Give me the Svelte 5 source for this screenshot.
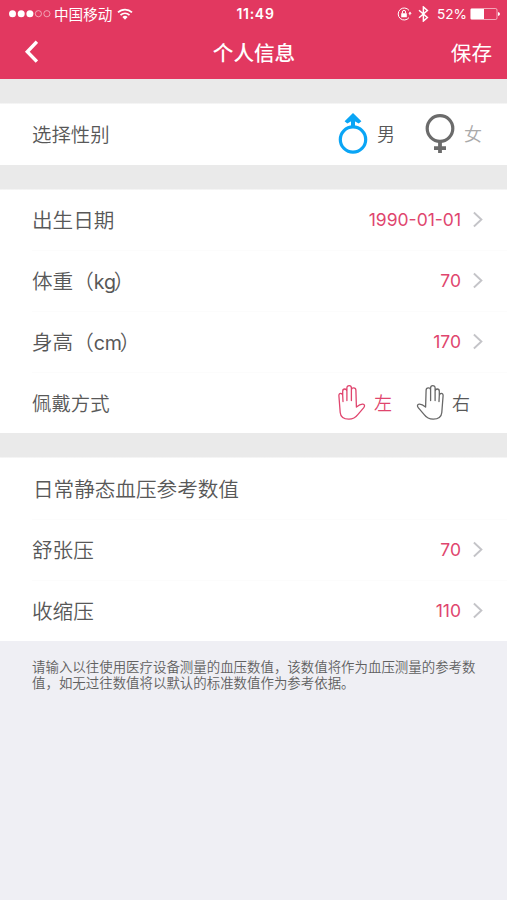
<script>
  const profile = [
    { label: '出生日期', value: '1990-01-01' },
    { label: '体重', unit: 'kg', value: '70' },
    { label: '身高', unit: 'cm', value: '170' }
  ];
  const pressure = [
    { label: '舒张压', value: '70' },
    { label: '收缩压', value: '110' }
  ];
</script>

{#snippet hand()}
  <path d="M5 16.5 4.7 10.5C4.6 9.2 3.8 8.4 2.6 8.4S.8 9.3.9 10.8L2.2 27.5C2.6 32 5.8 34.1 10.8 34.1c3.9 0 6.8-1.5 9-4.5l6-7c1.2-1.4 1-3.2-1-3.4-2.2-.2-4.3 1.1-6.4 2.8L17.9 5.2c0-1.5-.9-2.3-2.3-2.3S13.4 3.6 13.4 5M4.7 10.5V6.2C4.7 4.8 5.4 4 6.7 4s2.2.8 2.2 2.2v9.3M8.9 6V3C8.9 1.5 9.8.7 11.2.7S13.4 1.5 13.4 3v12.5" />
{/snippet}

{#snippet rowItem(item)}
  <div class="row">
    <span class="label">{item.label}{#if item.unit}（<span class="unit">{item.unit}</span>）{/if}</span>
    <span class="value">{item.value}</span>
    <svg class="chevron" width="11" height="17" viewBox="0 0 11 17"><path d="M.9 1.5 8.4 8.5l-7.5 7" /></svg>
  </div>
{/snippet}

<div class="screen">
  <header>
    <div class="status">
      <div class="carrier">
        <svg width="43" height="10" viewBox="0 0 43 10">
          <g fill="#fff"><circle cx="3.5" cy="4.7" r="3.5" /><circle cx="12.2" cy="4.7" r="3.5" /><circle cx="20.9" cy="4.7" r="3.5" /></g>
          <g fill="none" stroke="#fff" stroke-width=".7" opacity=".75"><circle cx="29.4" cy="4.7" r="3.1" /><circle cx="37.9" cy="4.7" r="3.1" /></g>
        </svg>
        <span>中国移动</span>
        <svg class="wifi" width="16" height="12" viewBox="0 0 16 12">
          <g fill="none" stroke="#fff" stroke-width="1.7"><path d="M1 4.4a10 10 0 0 1 14 0M3.5 7.1a6.4 6.4 0 0 1 9 0" /></g>
          <path fill="#fff" d="M5.4 9a3.7 3.7 0 0 1 5.2 0L8 11.7z" />
        </svg>
      </div>
      <div class="time">11:49</div>
      <div class="system">
        <svg width="15" height="14" viewBox="0 0 15 14">
          <path fill="none" stroke="#fff" d="M12 3.4A6 6 0 1 0 12 10.6M12.9 8.2V6" />
          <path fill="#fff" d="m11.4 6.8 1.6-2.3 1.7 2.3zM4.2 6.2h5.6v4H4.2z" />
          <path fill="none" stroke="#fff" d="M5.4 6.5V5a1.6 1.6 0 0 1 3.2 0v1.5" />
        </svg>
        <svg class="bt" width="11" height="16" viewBox="0 0 11 16"><path fill="none" stroke="#fff" stroke-width="1.5" d="m1 4.2 8.4 7.3-4 3.5V1l4 3.5L1 11.8" /></svg>
        <span>52%</span>
        <svg class="battery" width="30" height="12" viewBox="0 0 30 12">
          <rect x=".5" y=".5" width="26.5" height="11" rx="1.5" fill="none" stroke="#fff" stroke-width=".7" opacity=".8" />
          <path fill="#fff" d="M1 1h13v10H1zM28 4q2 .5 2 2t-2 2z" />
        </svg>
      </div>
    </div>
    <nav>
      <svg width="14" height="24" viewBox="0 0 14 24"><path fill="none" stroke="#fff" stroke-width="3.4" d="M12.9 1.8 3.3 11.7l9.6 9.9" /></svg>
      <h1>个人信息</h1>
      <span class="save">保存</span>
    </nav>
  </header>

  <section>
    <div class="row">
      <span class="label small">选择性别</span>
      <div class="choices gender">
        <svg width="30" height="42" viewBox="0 0 30 42">
          <g fill="none" stroke="#0aa5f5" stroke-width="3.2"><circle cx="15" cy="26.5" r="12.7" /><path d="M15 14V4" stroke-width="4" /></g>
          <path fill="#0aa5f5" d="M15 0 23.4 8.2 20.7 10.6 15 7.2 9.3 10.6 6.6 8.2z" />
        </svg>
        <span>男</span>
        <svg class="female" width="30" height="42" viewBox="0 0 30 42">
          <g fill="none" stroke="#6b6b6b" stroke-width="3.2"><circle cx="15" cy="15.5" r="12.8" /><path d="M15 28v12M9 35.2h12" stroke-width="3.8" /></g>
        </svg>
        <span class="off">女</span>
      </div>
    </div>
  </section>

  <section>
    {#each profile as item}{@render rowItem(item)}{/each}
    <div class="row">
      <span class="label small">佩戴方式</span>
      <div class="choices hands">
        <svg class="hand left" width="28" height="35" viewBox="0 0 28 35">{@render hand()}</svg>
        <span class="active">左</span>
        <svg class="hand right" width="28" height="35" viewBox="0 0 28 35"><g transform="translate(28 0) scale(-1 1)">{@render hand()}</g></svg>
        <span>右</span>
      </div>
    </div>
  </section>

  <section>
    <div class="row"><span class="label heading">日常静态血压参考数值</span></div>
    {#each pressure as item}{@render rowItem(item)}{/each}
  </section>

  <p>请输入以往使用医疗设备测量的血压数值，该数值将作为血压测量的参考数值，如无过往数值将以默认的标准数值作为参考依据。</p>
</div>

<style>
  :global(body) { margin: 0; background: #efeff4; }
  .screen {
    width: 507px; height: 900px; overflow: hidden; background: #efeff4; color: #585858;
    font-family: Inter, "Noto Sans CJK SC", sans-serif; font-weight: 350;
  }
  header { height: 79px; background: #e23860; color: #fff; font-weight: 400; }
  .status { height: 27px; display: grid; grid-template-columns: 1fr auto 1fr; align-items: center; padding: 0 7px 0 9px; font-size: 14px; line-height: 26px; }
  .carrier, .system { display: flex; align-items: center; height: 26px; }
  .carrier span { margin-left: 2px; font-size: 14.6px; padding-top: 2px; line-height: 26px; }
  .wifi { margin-left: 5px; }
  .time { font-weight: 600; font-size: 14px; letter-spacing: .7px; padding-left: 2px; height: 26px; }
  .system { justify-content: flex-end; }
  .bt { margin: 0 8px 0 6px; }
  .battery { margin-left: 3px; }
  .system span { font-size: 13.7px; }
  nav { height: 52px; display: grid; grid-template-columns: 1fr auto 1fr; align-items: center; padding: 0 15px 0 24px; box-sizing: border-box; }
  nav svg { margin-bottom: 2px; }
  h1 { margin: 0; font-size: 20.6px; line-height: 30px; font-weight: 500; padding: 1px 8px 0 0; }
  .save { justify-self: end; font-size: 20.6px; line-height: 30px; padding-top: 1px; }
  section { background: linear-gradient(#eaeaea, #eaeaea) 0 0 / 100% 24.5px no-repeat #fff; padding-top: 24.5px; }
  .row { height: 61.1px; display: flex; align-items: center; padding: 0 23px 0 32px; }
  .row + .row { background: linear-gradient(#fcfcfc, #fcfcfc) 32px 0 / 475px 1px no-repeat; }
  .label { flex: 1; font-size: 20.6px; line-height: 30px; white-space: nowrap; padding-top: 2.4px; }
  .unit { font-size: 19.6px; font-weight: 400; letter-spacing: -.2px; margin: 0 -2px 0 0; }
  .small { font-size: 19.4px; }
  .heading { padding-left: 1px; }
  .value { color: #e0456e; font-size: 17.5px; line-height: 24px; font-weight: 400; }
  .chevron { margin-left: 12px; }
  .chevron path { fill: none; stroke: #c4c4c8; stroke-width: 1.9; }
  .choices { display: flex; align-items: center; font-size: 18px; line-height: 26px; }
  .choices span { padding-top: 2px; }
  .gender { margin-right: 2px; }
  .gender span { margin-left: 9px; }
  .female { margin-left: 30px; }
  .off { color: #aaa; }
  .hands { margin-right: 14px; }
  .hands span { margin-left: 8px; }
  .right { margin-left: 24px; }
  .hand { fill: none; stroke: #686868; stroke-width: 1.3; stroke-linejoin: round; stroke-linecap: round; }
  .left { stroke: #e0456e; }
  .active { color: #e0456e; }
  p { margin: 17.5px 30px 0 32px; font-size: 13.44px; line-height: 16.5px; color: #606060; word-break: break-all; }
</style>
